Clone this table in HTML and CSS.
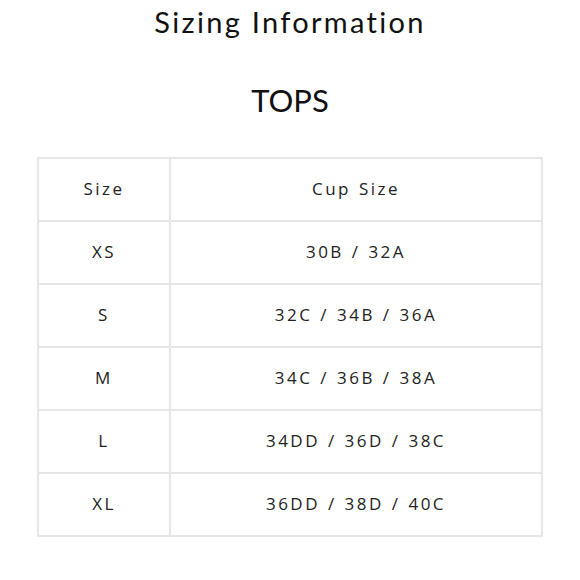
FILE: index.html
```html
<!DOCTYPE html>
<html>
<head>
<meta charset="utf-8">
<link rel="stylesheet" href="styles.css">
</head>
<body>
<div class="page">
  <h1 class="title">Sizing Information</h1>
  <h2 class="subtitle">TOPS</h2>
  <table class="sizes">
    <tr><td class="c1">Size</td><td>Cup Size</td></tr>
    <tr><td class="c1">XS</td><td>30B / 32A</td></tr>
    <tr><td class="c1">S</td><td>32C / 34B / 36A</td></tr>
    <tr><td class="c1">M</td><td>34C / 36B / 38A</td></tr>
    <tr><td class="c1">L</td><td>34DD / 36D / 38C</td></tr>
    <tr><td class="c1">XL</td><td>36DD / 38D / 40C</td></tr>
  </table>
</div>
</body>
</html>
```
FILE: styles.css
```css
html, body { margin: 0; padding: 0; background: #fff; }
.page { width: 580px; height: 580px; display: flex; flex-direction: column; align-items: center; color: #111; }
.title { font-family: Lato, "Liberation Sans", sans-serif; font-weight: 400; font-size: 29px; letter-spacing: 2.3px; margin: 4px 0 0; line-height: 36px; }
.subtitle { font-family: Lato, "Liberation Sans", sans-serif; font-weight: 400; font-size: 31px; margin: 42px 0 0; line-height: 36px; }
.sizes { margin-top: 39px; width: 506px; border-collapse: collapse; border: 2px solid #e6e6e6; font-family: "Open Sans", sans-serif; font-size: 17px; letter-spacing: 2.5px; word-spacing: 1px; color: #222; }
.sizes td { border: 2px solid #e6e6e6; height: 59px; padding: 0 0 2px; text-align: center; vertical-align: middle; }
.sizes .c1 { width: 130px; }
```
